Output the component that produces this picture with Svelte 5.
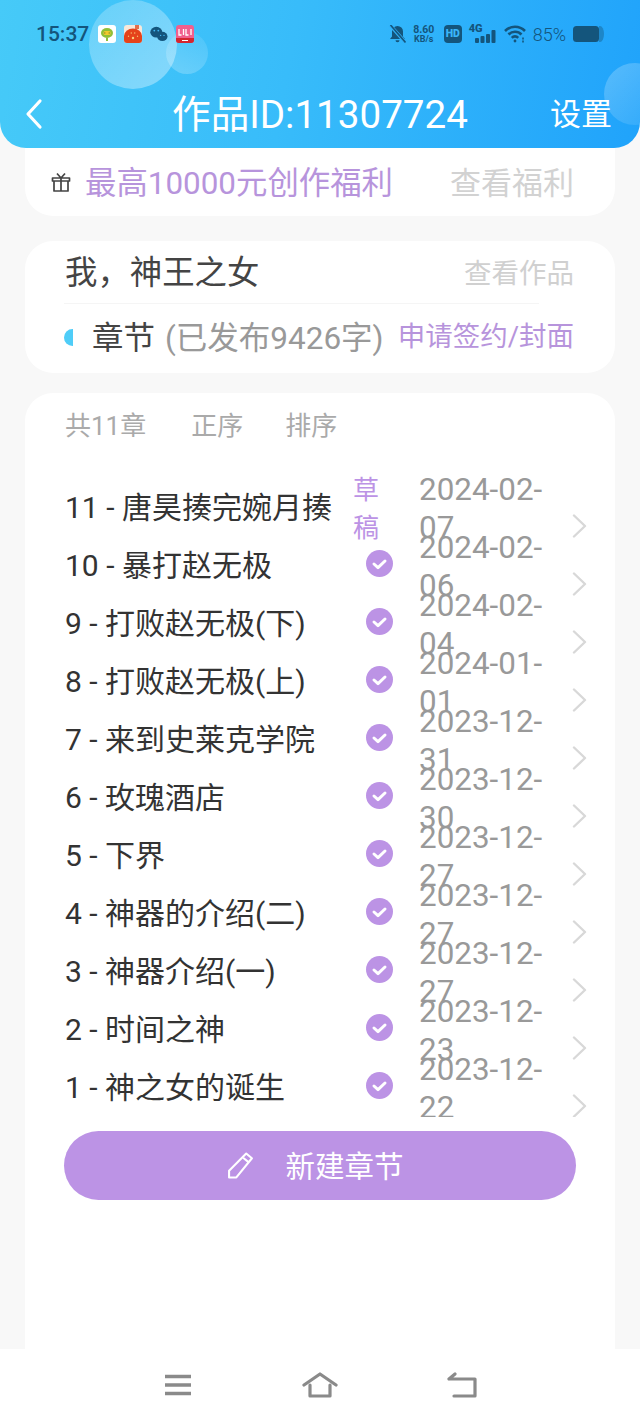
<script>
  const chapters = [
    { title: '11 - 唐昊揍完婉月揍', date: '2024-02-07', draft: true },
    { title: '10 - 暴打赵无极', date: '2024-02-06' },
    { title: '9 - 打败赵无极(下)', date: '2024-02-04' },
    { title: '8 - 打败赵无极(上)', date: '2024-01-01' },
    { title: '7 - 来到史莱克学院', date: '2023-12-31' },
    { title: '6 - 玫瑰酒店', date: '2023-12-30' },
    { title: '5 - 下界', date: '2023-12-27' },
    { title: '4 - 神器的介绍(二)', date: '2023-12-27' },
    { title: '3 - 神器介绍(一)', date: '2023-12-27' },
    { title: '2 - 时间之神', date: '2023-12-23' },
    { title: '1 - 神之女的诞生', date: '2023-12-22' }
  ];
</script>

<div class="page">
  <header class="header">
    <span class="bubble big"></span>
    <span class="bubble small"></span>
    <span class="bubble corner"></span>

    <div class="status">
      <span class="time">15:37</span>
      <div class="apps">
        <svg width="18" height="18" viewBox="0 0 18 18"><rect width="18" height="18" rx="3" fill="#fff"/><ellipse cx="9" cy="8" rx="6" ry="5" fill="#8fbf3a"/><rect x="5.5" y="6" width="7" height="4" rx="1.5" fill="#f1c92f"/><path d="M6.8 7.5v1M11.2 7.5v1" stroke="#556b1e" stroke-width="1"/><path d="M8 13h2v3H8z" fill="#8fbf3a"/></svg>
        <svg width="18" height="18" viewBox="0 0 18 18"><rect width="18" height="18" rx="3" fill="#f8e8da"/><path d="M0 15V11a9 7.5 0 0 1 18 0v4a3 3 0 0 1-3 3H3a3 3 0 0 1-3-3z" fill="#e5431a"/><rect x="11" y="0" width="4" height="4" fill="#e2704c"/><path d="M4 11l1 .5M7 7.5l.5 1M11 7.5l-.5 1M14 11l-1 .5" stroke="#f9d27c" stroke-width="1.2"/><circle cx="9" cy="13" r="1.2" fill="#f9d27c"/></svg>
        <svg width="18" height="18" viewBox="0 0 18 18"><ellipse cx="6.3" cy="7.2" rx="6" ry="5.4" fill="#14557c"/><ellipse cx="12.3" cy="11.4" rx="5.2" ry="4.6" fill="#14557c"/><circle cx="4.3" cy="5.6" r=".9" fill="#3fb8f5"/><circle cx="8.3" cy="5.6" r=".9" fill="#3fb8f5"/><circle cx="10.6" cy="10.4" r=".7" fill="#3fb8f5"/><circle cx="14" cy="10.4" r=".7" fill="#3fb8f5"/></svg>
        <svg width="18" height="18" viewBox="0 0 18 18"><rect width="18" height="18" rx="3" fill="#f0608e"/><path d="M0 13h18v2a3 3 0 0 1-3 3H3a3 3 0 0 1-3-3z" fill="#d4262f"/><path d="M3 4v6h2.5M7.5 4v6M10 4v6h2.5M15 4v6" fill="none" stroke="#fff" stroke-width="1.3"/><path d="M6 15.5h6" stroke="#fff" stroke-width="1"/></svg>
      </div>
      <div class="sys">
        <svg class="bell" width="17" height="18" viewBox="0 0 17 18"><path d="M8.5 1a5.5 5.5 0 0 1 5.5 5.5v5l2 2.5H1l2-2.500v-5A5.500 5.500 0 0 1 8.500 1zM6.500 15.200h4a2 2 0 0 1-4 0z" fill="#14557c"/><path d="M1 0l15 17" stroke="#2fb0f8" stroke-width="3.4"/><path d="M1.5 0l15 17.5" stroke="#14557c" stroke-width="1.6"/></svg>
        <div class="speed"><span>8.60</span><span class="unit">KB/s</span></div>
        <span class="hd">HD</span>
        <div class="net">
          <span class="g4">4G</span>
          <svg width="27" height="18" viewBox="0 0 27 18"><rect x="6" y="13" width="4" height="5" rx="1" fill="#14557c"/><rect x="11.5" y="11" width="4" height="7" rx="1" fill="#14557c"/><rect x="17" y="9" width="4" height="9" rx="1" fill="#14557c"/><rect x="22.5" y="5" width="4" height="13" rx="1" fill="#14557c"/></svg>
        </div>
        <svg class="wifi" width="22" height="18" viewBox="0 0 22 18" fill="none" stroke="#14557c" stroke-width="2.6"><path d="M1 6a14 14 0 0 1 20 0M4.5 9.5a9 9 0 0 1 13 0M7.8 12.8a4.4 4.4 0 0 1 6.4 0"/><circle cx="11" cy="16" r="1.4" fill="#14557c" stroke="none"/><path d="M19 12.5v2M19 15.5v2" stroke-width="1.6"/></svg>
        <span class="pct">85%</span>
        <svg class="batt" width="31" height="16" viewBox="0 0 31 16"><rect width="26" height="16" rx="3.5" fill="#14557c"/><path d="M26 0h1a4 8 0 0 1 4 8 4 8 0 0 1-4 8h-1z" fill="#14557c" opacity=".4"/></svg>
      </div>
    </div>

    <div class="topbar">
      <svg class="back" width="20" height="32" viewBox="0 0 20 32" fill="none" stroke="#fff" stroke-width="3.2" stroke-linecap="round" stroke-linejoin="round"><path d="M16 3 4 16l12 13"/></svg>
      <span class="title">作品ID:11307724</span>
      <span class="settings">设置</span>
    </div>
  </header>

  <main class="main">
    <section class="card welfare">
      <svg class="gift" width="20" height="20" viewBox="0 0 20 20" fill="none" stroke="#444" stroke-width="1.7" stroke-linejoin="round"><path d="M1.5 6h17v3h-17zM3 9v10h14V9M10 6v13M6 1.5 10 6l4-4.5"/></svg>
      <span class="welfare-text">最高10000元创作福利</span>
      <span class="welfare-link">查看福利</span>
    </section>

    <section class="card work">
      <div class="work-row">
        <span class="work-name">我，神王之女</span>
        <span class="work-link">查看作品</span>
      </div>
      <div class="divider"></div>
      <div class="chapter-row">
        <span class="dot"></span>
        <span class="chapter-label">章节</span>
        <span class="chapter-count">(已发布9426字)</span>
        <span class="apply">申请签约/封面</span>
      </div>
    </section>

    <section class="card chapters">
      <div class="sort">
        <span>共11章</span>
        <span>正序</span>
        <span class="sort-last">排序</span>
      </div>
      <div class="list">
        {#each chapters as c}
          <div class="row">
            <span class="name">{c.title}</span>
            <span class="state">
              {#if c.draft}
                <span class="draft">草稿</span>
              {:else}
                <svg class="check" width="27" height="27" viewBox="0 0 27 27"><circle cx="13.5" cy="13.5" r="13.5" fill="#bc93e5"/><path d="M8 14l4 3.6 7-6.6" fill="none" stroke="#fff" stroke-width="3" stroke-linecap="round" stroke-linejoin="round"/></svg>
              {/if}
            </span>
            <span class="date">{c.date}</span>
            <svg class="chev" width="15" height="24" viewBox="0 0 15 24" fill="none" stroke="#d8d8d8" stroke-width="2.4" stroke-linecap="round" stroke-linejoin="round"><path d="M2 1.5 13 12 2 22.5"/></svg>
          </div>
        {/each}
      </div>
      <button class="create">
        <svg width="27" height="27" viewBox="0 0 26 26" fill="none" stroke="#fff" stroke-width="2" stroke-linejoin="round"><path d="M18.5 1.5 24 6 9 24.5H2V18z"/><path d="M15.5 5.5 21 10"/></svg>
        <span class="create-label">新建章节</span>
      </button>
    </section>
  </main>

  <nav class="nav">
    <svg width="28" height="22" viewBox="0 0 28 22" fill="none" stroke="#8a8a8a" stroke-width="3.4"><path d="M1 2.5h26M1 11h26M1 19.5h26"/></svg>
    <svg width="36" height="26" viewBox="0 0 36 26" fill="none" stroke="#8a8a8a" stroke-width="3.2" stroke-linecap="round" stroke-linejoin="round"><path d="M2 13 18 2l16 11M8 13v11h20V13"/></svg>
    <svg width="30" height="26" viewBox="0 0 30 26" fill="none" stroke="#8a8a8a" stroke-width="3.2" stroke-linecap="round" stroke-linejoin="round"><path d="M2 7h26v17H7M8 2 2 7"/></svg>
  </nav>
</div>

<style>
  :global(body) {
    margin: 0;
    background: #f8f8f8;
  }
  .page {
    width: 640px;
    height: 1423px;
    display: flex;
    flex-direction: column;
    overflow: hidden;
    font-family: Roboto, "Noto Sans CJK SC", sans-serif;
  }
  .header {
    position: relative;
    height: 148px;
    flex: none;
    overflow: hidden;
    border-radius: 0 0 26px 26px;
    background: linear-gradient(100deg, #46caf8 0%, #38bcfa 45%, #20a3fb 100%);
    z-index: 1;
  }
  .bubble {
    position: absolute;
    border-radius: 50%;
    background: linear-gradient(135deg, rgba(255, 255, 255, 0.2), rgba(255, 255, 255, 0.38));
  }
  .big { left: 89px; top: 0; width: 88px; height: 89px; }
  .small {
    left: 166px; top: 32px; width: 42px; height: 42px;
    background: linear-gradient(200deg, rgba(255, 255, 255, 0.08), rgba(255, 255, 255, 0.24));
  }
  .corner {
    left: 604px; top: 63px; width: 62px; height: 62px;
    background: linear-gradient(135deg, rgba(255, 255, 255, 0.24), rgba(255, 255, 255, 0.06));
  }
  .status {
    position: relative;
    height: 68px;
    display: flex;
    align-items: center;
    padding: 0 36px;
    color: #14557c;
    box-sizing: border-box;
  }
  .time { font-size: 21px; font-weight: 500; }
  .apps { display: flex; align-items: center; gap: 8px; margin-left: 9px; }
  .sys { display: flex; align-items: center; margin-left: auto; }
  .speed {
    display: flex; flex-direction: column; align-items: center;
    width: 22px;
    font-size: 10.5px; line-height: 10px; font-weight: 700;
    margin-left: 7px;
  }
  .unit { font-size: 9px; line-height: 9px; }
  .hd {
    margin-left: 9px;
    width: 18px; height: 18px; border-radius: 4px;
    background: #14557c; color: #3ab6f9;
    font-size: 10.5px; line-height: 18px; font-weight: 900; text-align: center;
  }
  .net { position: relative; margin-left: 7px; width: 27px; height: 18px; }
  .g4 {
    position: absolute; left: 0; top: -2px;
    font-size: 11px; line-height: 12px; font-weight: 900;
  }
  .wifi { margin-left: 8px; }
  .pct { margin-left: 7px; font-size: 18px; font-weight: 300; }
  .batt { margin-left: 7px; }
  .topbar {
    position: relative;
    height: 68px;
    margin-top: 12px;
    display: grid;
    grid-template-columns: 1fr auto 1fr;
    align-items: center;
    color: #fff;
  }
  .back { margin-left: 24px; }
  .title { font-size: 38.6px; line-height: 68px; position: relative; top: 1px; }
  .settings { justify-self: end; margin: 0 28px 6px 0; font-size: 31px; }

  .main {
    flex: 1;
    min-height: 0;
    padding: 0 25px;
    display: flex;
    flex-direction: column;
  }
  .card { background: #fff; }
  .welfare {
    height: 68px;
    flex: none;
    display: flex;
    align-items: center;
    box-sizing: border-box;
    padding: 0 41px 0 26px;
    border-radius: 0 0 28px 28px;
  }
  .welfare-text { margin: 0 0 4px 14px; font-size: 31.4px; color: #b794dc; }
  .welfare-link { margin: 0 0 4px auto; font-size: 31px; color: #d2d2d2; }
  .work {
    margin-top: 25px;
    height: 132px;
    flex: none;
    box-sizing: border-box;
    padding: 0 41px 0 39px;
    border-radius: 28px;
  }
  .work-row {
    height: 62px;
    display: flex;
    align-items: center;
    justify-content: space-between;
    box-sizing: border-box;
  }
  .work-name { margin: 0 0 5px 1px; font-size: 32.4px; color: #444; }
  .work-link { margin-bottom: 3px; font-size: 27.5px; color: #d0d0d0; }
  .divider { height: 1px; margin-right: 35px; background: #f5f5f5; }
  .chapter-row { height: 67px; display: flex; align-items: center; }
  .dot {
    width: 9px; height: 17px;
    border-radius: 9px 0 0 9px;
    background: #4fcdf8;
  }
  .chapter-label { margin: 0 0 6px 19px; font-size: 31.5px; color: #444; }
  .chapter-count { margin: 0 0 6px 10px; font-size: 31.5px; color: #999; }
  .apply { margin: 0 0 8px auto; font-size: 27.5px; color: #b794dc; }

  .chapters {
    margin-top: 20px;
    flex: 1;
    min-height: 0;
    border-radius: 28px 28px 0 0;
  }
  .sort {
    height: 60px;
    padding-left: 40px;
    display: flex;
    align-items: center;
    gap: 45px;
    font-size: 26px;
    color: #aaa;
    margin-bottom: 4px;
  }
  .sort-last { margin-left: -3px; }
  .list {
    padding: 21px 28px 1px 40px;
    overflow: hidden;
  }
  .row {
    height: 58px;
    display: flex;
    align-items: center;
  }
  .name { width: 288px; flex: none; margin-bottom: 4px; font-size: 30px; color: #333; white-space: nowrap; }
  .state { width: 40px; flex: none; display: flex; justify-content: flex-end; }
  .draft { width: 26px; margin: 4px 14px 0 0; font-size: 26px; line-height: 38px; color: #bc93e5; }
  .check { margin: 0 0 3px 0; }
  .date {
    width: 130px;
    flex: none;
    margin: 4px 0 0 26px;
    font-size: 31.4px;
    line-height: 38px;
    color: #999;
  }
  .chev { flex: none; margin-left: 23px; margin-top: 38px; }
  .create {
    display: flex;
    align-items: center;
    justify-content: center;
    gap: 31px;
    width: 512px;
    height: 69px;
    margin: 14px 0 0 39px;
    padding: 0 9px 0 0;
    border: 0;
    border-radius: 35px;
    background: #bc93e5;
    color: #fff;
    font-family: inherit;
    font-size: 29.5px;
  }
  .create-label { margin-bottom: 4px; }
  .nav {
    height: 74px;
    flex: none;
    position: relative;
    background: #fff;
    display: grid;
    grid-template-columns: 138px 145px 1fr;
    padding-left: 164px;
    box-sizing: border-box;
    padding-top: 23px;
    align-items: start;
    justify-items: start;
  }
  .nav svg:first-child { margin-top: 2px; }
</style>
